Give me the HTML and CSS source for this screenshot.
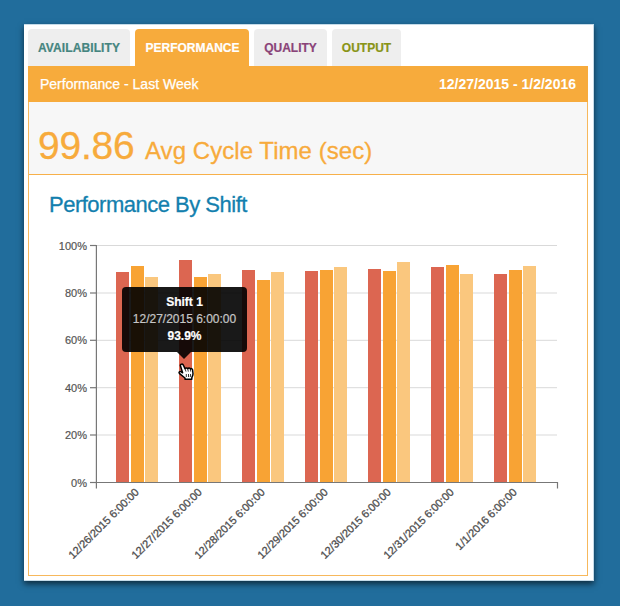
FILE: index.html
```
<!DOCTYPE html>
<html lang="en">
<head>
<meta charset="utf-8">
<title>Performance</title>
<link rel="stylesheet" href="styles.css">
</head>
<body>
<main class="card">
  <nav class="tabs">
    <a class="tab availability"><span>AVAILABILITY</span></a>
    <a class="tab performance"><span>PERFORMANCE</span></a>
    <a class="tab quality"><span>QUALITY</span></a>
    <a class="tab output"><span>OUTPUT</span></a>
  </nav>
  <section class="panel">
    <header class="bar"><span class="title">Performance - Last Week</span><strong class="range">12/27/2015 - 1/2/2016</strong></header>
    <div class="summary"><span class="value">99.86</span><span class="label">Avg Cycle Time (sec)</span></div>
    <h2 class="heading">Performance By Shift</h2>
    <div class="chart">
      <svg id="plot" width="558" height="345" viewBox="29 225 558 345"></svg>
      <div class="tooltip"><b>Shift 1</b><span>12/27/2015 6:00:00</span><b>93.9%</b></div>
      <svg class="pointer" width="16" height="18" viewBox="0 0 16 18">
        <path d="M3.2 1.3C4.2 .8 5 1.3 5.4 2.2L7 5.6C7.7 4.6 9.2 4.7 9.7 5.7C10.5 4.6 12 4.8 12.4 5.9C13.5 5.2 14.6 6 14.6 7L15 10.5C15.1 12.5 14 13.6 13.8 15V16.2H7V15L1.6 10.7C.4 9.4 1.6 7.8 3.2 8.8L4.6 9.8L2.5 3C2.2 2.2 2.5 1.6 3.2 1.3Z" fill="#fff" stroke="#000" stroke-width="1.5" stroke-linejoin="round"/>
        <path d="M7 5.6L8 8.6M9.7 5.7L10.3 8.6M12.4 5.9L12.7 8.6M8.3 11V14M10.5 11V14M12.6 11L12.3 14" fill="none" stroke="#000" stroke-width=".8"/>
      </svg>
    </div>
  </section>
</main>
<script src="chart.js"></script>
</body>
</html>
```
FILE: styles.css
```
* { box-sizing: border-box; }
body {
  margin: 0;
  height: 606px;
  padding: 24px 26px 0 24px;
  overflow: hidden;
  background: #216d9c;
  font-family: "Liberation Sans", Arial, sans-serif;
}
.card {
  height: 557px;
  padding: 4px 5px 5px 4px;
  background: #fff;
  border: 1px solid #c4dbe9;
  border-left: 0;
  box-shadow: 0 3px 6px rgba(0, 0, 0, .6);
}
.tabs { display: flex; gap: 5px; height: 37px; }
.tab {
  display: flex;
  align-items: center;
  justify-content: center;
  border-radius: 4px 4px 0 0;
  background: #eee;
  font-size: 12px;
  font-weight: bold;
  white-space: nowrap;
  -webkit-text-stroke: .2px currentColor;
}
.availability { width: 102px; color: #458580; letter-spacing: .1px; }
.performance { width: 114px; padding-left: 1px; color: #fff; background: #f7ab3c; }
.quality { width: 73px; color: #8a4378; }
.output { width: 69px; color: #899416; }
.panel { height: 510px; border: 1px solid #f7b85c; }
.bar {
  display: flex;
  justify-content: space-between;
  align-items: center;
  height: 36px;
  margin: -1px -1px 0;
  padding: 0 12px;
  color: #fff;
  background: #f7ab3c;
  font-size: 14px;
}
.title { -webkit-text-stroke: .25px currentColor; }
.range { letter-spacing: 0; }
.summary {
  display: flex;
  align-items: baseline;
  height: 73px;
  padding: 20px 9px 0;
  border-bottom: 1px solid #f7b04a;
  background: #f7f7f7;
  color: #f7ab3c;
  white-space: nowrap;
  -webkit-text-stroke: .3px currentColor;
}
.value { width: 107px; font-size: 39px; line-height: 48px; letter-spacing: -.2px; }
.label { font-size: 24px; letter-spacing: .05px; }
.heading {
  height: 50px;
  margin: 0;
  padding: 17px 20px 0;
  color: #137fae;
  font-size: 22px;
  line-height: 26px;
  font-weight: normal;
  letter-spacing: -.5px;
  -webkit-text-stroke: .3px currentColor;
}
.chart { position: relative; height: 345px; }
.chart > svg { display: block; }
.grid { stroke: #d9d9d9; }
.axis { fill: none; stroke: #777; stroke-width: 1.2; }
.tick { fill: #555; stroke: #555; stroke-width: .2px; font-size: 11px; text-anchor: end; }
.tick.date { fill: #4d4d4d; stroke: #4d4d4d; stroke-width: .3px; }
.red { fill: #dc6651; }
.orange { fill: #f8a334; }
.light { fill: #fac77e; }
.tooltip {
  position: absolute;
  left: 93px;
  top: 62px;
  width: 125px;
  height: 65px;
  padding-top: 7px;
  display: flex;
  flex-direction: column;
  align-items: center;
  border-radius: 4px;
  color: #fff;
  background: rgba(0, 0, 0, .9);
  font-size: 12px;
  line-height: 17px;
  white-space: nowrap;
  -webkit-text-stroke: .2px currentColor;
}
.tooltip span { color: #c6c6c6; }
.tooltip::after {
  content: "";
  position: absolute;
  top: 65px;
  left: 55px;
  border: 7px solid transparent;
  border-top-color: rgba(0, 0, 0, .9);
  border-bottom: 0;
}
.chart > .pointer { position: absolute; left: 149px; top: 138px; }
```
FILE: chart.js
```
const plot = document.getElementById('plot');
function add(name, attrs, text) {
  const el = document.createElementNS('http://www.w3.org/2000/svg', name);
  for (const key in attrs) el.setAttribute(key, attrs[key]);
  if (text) el.textContent = text;
  plot.appendChild(el);
}
const baseline = 482.5;
const levels = [[100, 245.5], [80, 293], [60, 340.3], [40, 387.7], [20, 435], [0, baseline]];
for (const [percent, y] of levels) {
  if (percent) add('line', { class: 'grid', x1: 97, x2: 557, y1: y, y2: y });
  add('line', { class: 'axis', x1: 90, x2: 96, y1: y, y2: y });
  add('text', { class: 'tick', x: 87, y: y + 4 }, percent + '%');
}
const groups = [
  ['12/26/2015', 272, 266, 277], ['12/27/2015', 260, 277, 274],
  ['12/28/2015', 270, 280, 272], ['12/29/2015', 271, 270, 267],
  ['12/30/2015', 269, 271, 262], ['12/31/2015', 267, 265, 274],
  ['1/1/2016', 274, 270, 266]
];
groups.forEach(([date, ...tops], i) => {
  const x = 116 + i * 63;
  tops.forEach((top, j) => add('rect', {
    class: ['red', 'orange', 'light'][j], x: x + [0, 15, 29][j], y: top,
    width: 13, height: baseline - top
  }));
  add('text', {
    class: 'tick date', textLength: i < 6 ? 94 : 81.5,
    transform: `translate(${x + 23.5} 493) rotate(-45)`
  }, date + ' 6:00:00');
});
add('path', { class: 'axis', d: 'M96.4 245V488.5M96 482.5H557.5V488.5' });
```
